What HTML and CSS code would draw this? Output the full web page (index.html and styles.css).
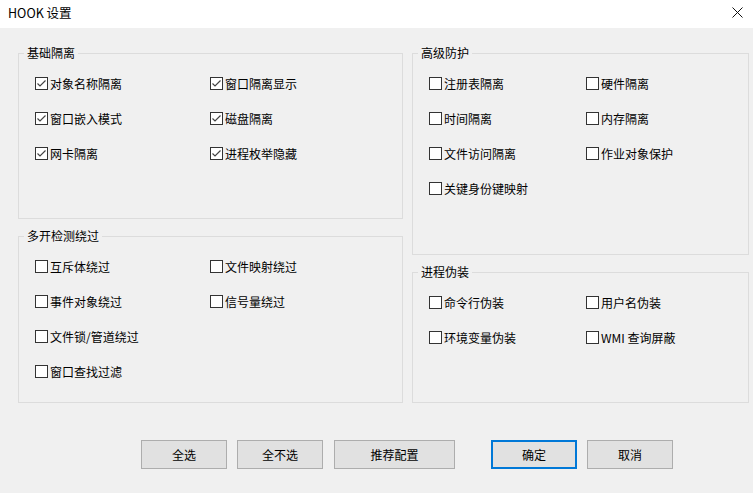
FILE: index.html
```html
<!DOCTYPE html>
<html lang="zh-CN">
<head>
<meta charset="utf-8">
<title>HOOK 设置</title>
<link rel="stylesheet" href="styles.css">
</head>
<body>
<div class="window">
  <div class="titlebar">
    <span class="title">HOOK 设置</span>
    <span class="close">
      <svg width="11" height="11" viewBox="0 0 11 11"><path d="M0.5 0.5 L10.5 10.5 M10.5 0.5 L0.5 10.5" stroke="#111" stroke-width="1" fill="none"/></svg>
    </span>
  </div>
  <div class="content">
    <div class="columns">
      <div class="col col-left">
        <fieldset class="group g-basic">
          <legend>基础隔离</legend>
          <div class="opts opts-left">
            <label class="opt"><span class="box checked"><svg width="11" height="11" viewBox="0 0 11 11"><path d="M1.5 5.5 L4 8 L9.5 2.5" stroke="#444" stroke-width="1.2" fill="none"/></svg></span>对象名称隔离</label>
            <label class="opt"><span class="box checked"><svg width="11" height="11" viewBox="0 0 11 11"><path d="M1.5 5.5 L4 8 L9.5 2.5" stroke="#444" stroke-width="1.2" fill="none"/></svg></span>窗口隔离显示</label>
            <label class="opt"><span class="box checked"><svg width="11" height="11" viewBox="0 0 11 11"><path d="M1.5 5.5 L4 8 L9.5 2.5" stroke="#444" stroke-width="1.2" fill="none"/></svg></span>窗口嵌入模式</label>
            <label class="opt"><span class="box checked"><svg width="11" height="11" viewBox="0 0 11 11"><path d="M1.5 5.5 L4 8 L9.5 2.5" stroke="#444" stroke-width="1.2" fill="none"/></svg></span>磁盘隔离</label>
            <label class="opt"><span class="box checked"><svg width="11" height="11" viewBox="0 0 11 11"><path d="M1.5 5.5 L4 8 L9.5 2.5" stroke="#444" stroke-width="1.2" fill="none"/></svg></span>网卡隔离</label>
            <label class="opt"><span class="box checked"><svg width="11" height="11" viewBox="0 0 11 11"><path d="M1.5 5.5 L4 8 L9.5 2.5" stroke="#444" stroke-width="1.2" fill="none"/></svg></span>进程枚举隐藏</label>
          </div>
        </fieldset>
        <fieldset class="group g-multi">
          <legend>多开检测绕过</legend>
          <div class="opts opts-left">
            <label class="opt"><span class="box"></span>互斥体绕过</label>
            <label class="opt"><span class="box"></span>文件映射绕过</label>
            <label class="opt"><span class="box"></span>事件对象绕过</label>
            <label class="opt"><span class="box"></span>信号量绕过</label>
            <label class="opt"><span class="box"></span>文件锁/管道绕过</label>
            <span class="opt-empty"></span>
            <label class="opt"><span class="box"></span>窗口查找过滤</label>
          </div>
        </fieldset>
      </div>
      <div class="col col-right">
        <fieldset class="group g-adv">
          <legend>高级防护</legend>
          <div class="opts opts-right">
            <label class="opt"><span class="box"></span>注册表隔离</label>
            <label class="opt"><span class="box"></span>硬件隔离</label>
            <label class="opt"><span class="box"></span>时间隔离</label>
            <label class="opt"><span class="box"></span>内存隔离</label>
            <label class="opt"><span class="box"></span>文件访问隔离</label>
            <label class="opt"><span class="box"></span>作业对象保护</label>
            <label class="opt"><span class="box"></span>关键身份键映射</label>
          </div>
        </fieldset>
        <fieldset class="group g-proc">
          <legend>进程伪装</legend>
          <div class="opts opts-right">
            <label class="opt"><span class="box"></span>命令行伪装</label>
            <label class="opt"><span class="box"></span>用户名伪装</label>
            <label class="opt"><span class="box"></span>环境变量伪装</label>
            <label class="opt"><span class="box"></span>WMI 查询屏蔽</label>
          </div>
        </fieldset>
      </div>
    </div>
    <div class="buttons">
      <button class="btn w86">全选</button>
      <button class="btn w86 ml10">全不选</button>
      <button class="btn w121 ml11">推荐配置</button>
      <button class="btn w86 primary ml36">确定</button>
      <button class="btn w86 ml10">取消</button>
    </div>
  </div>
</div>
</body>
</html>
```

FILE: styles.css
```css
* {
  box-sizing: border-box;
}

html, body {
  margin: 0;
  padding: 0;
}

body {
  width: 753px;
  height: 493px;
  overflow: hidden;
  background: #f0f0f0;
  font-family: "Noto Sans CJK SC", "Noto Sans", sans-serif;
  font-size: 12px;
  color: #000;
}

.window {
  width: 753px;
  height: 493px;
  display: flex;
  flex-direction: column;
}

.titlebar {
  height: 28px;
  background: #fff;
  display: flex;
  align-items: center;
  justify-content: space-between;
  padding: 0 10px 3px 8px;
}

.title {
  font-size: 12.5px;
  line-height: 14px;
}

.close {
  display: flex;
  width: 11px;
  height: 11px;
  margin-top: 0;
}

.content {
  flex: 1;
  padding: 18px 0 0 18px;
}

.columns {
  display: flex;
  gap: 9px;
}

.col {
  display: flex;
  flex-direction: column;
  gap: 10px;
}

.col-left {
  width: 385px;
}

.col-right {
  width: 337px;
}

.group {
  margin: 0;
  padding: 0;
  border: 1px solid #dcdcdc;
  min-width: 0;
}

.group legend {
  margin-left: 5px;
  padding: 0 3px;
  line-height: 14px;
  font-size: 12px;
}

.g-basic {
  height: 173px;
}

.g-multi {
  height: 174px;
}

.g-adv {
  height: 209px;
}

.g-proc {
  height: 138px;
}

.opts {
  display: grid;
  grid-auto-rows: 35px;
  padding: 6px 0 0 16px;
}

.opts-left {
  grid-template-columns: 175px 1fr;
}

.opts-right {
  grid-template-columns: 157px 1fr;
}

.opt {
  display: flex;
  align-items: center;
  gap: 2px;
  line-height: 14px;
  white-space: nowrap;
}

.box {
  width: 13px;
  height: 13px;
  border: 1px solid #333;
  background: #fff;
  display: flex;
  align-items: center;
  justify-content: center;
  flex: none;
}

.buttons {
  display: flex;
  margin: 37px 0 0 123px;
}

.btn {
  height: 29px;
  border: 1px solid #adadad;
  background: #e1e1e1;
  font-family: inherit;
  font-size: 12px;
  color: #000;
  padding: 0;
  line-height: 14px;
}

.btn.primary {
  border: 2px solid #0078d7;
}

.w86 {
  width: 86px;
}

.w121 {
  width: 121px;
}

.ml10 {
  margin-left: 10px;
}

.ml11 {
  margin-left: 11px;
}

.ml36 {
  margin-left: 36px;
}
```
